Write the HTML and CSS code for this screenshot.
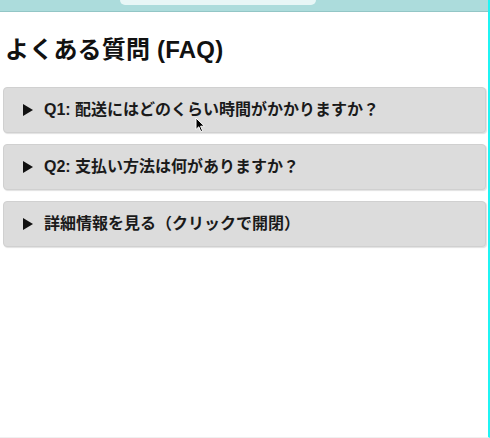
FILE: index.html
```html
<!DOCTYPE html>
<html lang="ja">
<head>
<meta charset="UTF-8">
<meta name="viewport" content="width=device-width, initial-scale=1.0">
<link rel="stylesheet" href="styles.css">
</head>
<body>
<div class="frame">
	<div class="topbar"><div class="tab"></div></div>

	<main class="content">
		<h2 class="title">よくある質問 (FAQ)</h2>

		<details class="faq">
			<summary class="question">Q1: 配送にはどのくらい時間がかかりますか？</summary>
			<p class="answer">通常、ご注文から3〜5営業日でお届けします。</p>
		</details>

		<details class="faq">
			<summary class="question">Q2: 支払い方法は何がありますか？</summary>
			<p class="answer">クレジットカード、銀行振込、代金引換がご利用いただけます。</p>
		</details>

		<details class="faq">
			<summary class="question">詳細情報を見る（クリックで開閉）</summary>
			<p class="answer">ここに詳細情報が表示されます。</p>
		</details>
	</main>

	<svg class="cursor" width="11" height="16" viewBox="0 0 11 16">
		<path d="M1 1 L1 12.5 L3.8 9.8 L5.8 14.6 L7.6 13.8 L5.6 9.2 L9.4 9.2 Z" fill="#000" stroke="#fff" stroke-width="1"/>
	</svg>
</div>
</body>
</html>
```

FILE: styles.css
```css
html, body {
	margin: 0;
	padding: 0;
	background-color: #fdfdfd;
	font-family: "Liberation Sans", "Noto Sans CJK JP", sans-serif;
	color: #222;
}

.frame {
	position: relative;
	width: 488px;
	height: 437px;
	border-right: 2px solid #1ff4f4;
	border-bottom: 1px solid #f0f0f0;
	background: linear-gradient(#acdcdc 0 11px, #93c6c6 11px 12px, #fff 12px);
}

.topbar {
	height: 12px;
}

.tab {
	width: 196px;
	height: 5px;
	margin-left: 120px;
	background-color: #e7f6f6;
	border-radius: 0 0 7px 7px;
}

.content {
	padding: 0 2px 0 3px;
}

.title {
	margin: 22px 0 21px 2px;
	font-size: 24px;
	line-height: 32px;
	font-weight: bold;
	letter-spacing: 0.2px;
	color: #111;
}

.faq {
	margin-bottom: 11px;
	background-color: #dcdcdc;
	border: 1px solid #d0d0d0;
	border-radius: 4px;
	box-shadow: 1px 1px 1px rgba(0, 0, 0, 0.12);
}

.question {
	display: flex;
	align-items: center;
	list-style: none;
	padding: 11px 18px;
	font-size: 16px;
	line-height: 22px;
	font-weight: bold;
	color: #1a1a1a;
	cursor: pointer;
}

.question::-webkit-details-marker {
	display: none;
}

.question::before {
	content: "";
	flex-shrink: 0;
	width: 0;
	height: 0;
	margin: 0 11px 0 1px;
	border-left: 10px solid #111;
	border-top: 6px solid transparent;
	border-bottom: 6px solid transparent;
}

.answer {
	margin: 0;
	padding: 0 18px 12px 40px;
	font-size: 14px;
}

.cursor {
	position: absolute;
	left: 195px;
	top: 117px;
}
```
